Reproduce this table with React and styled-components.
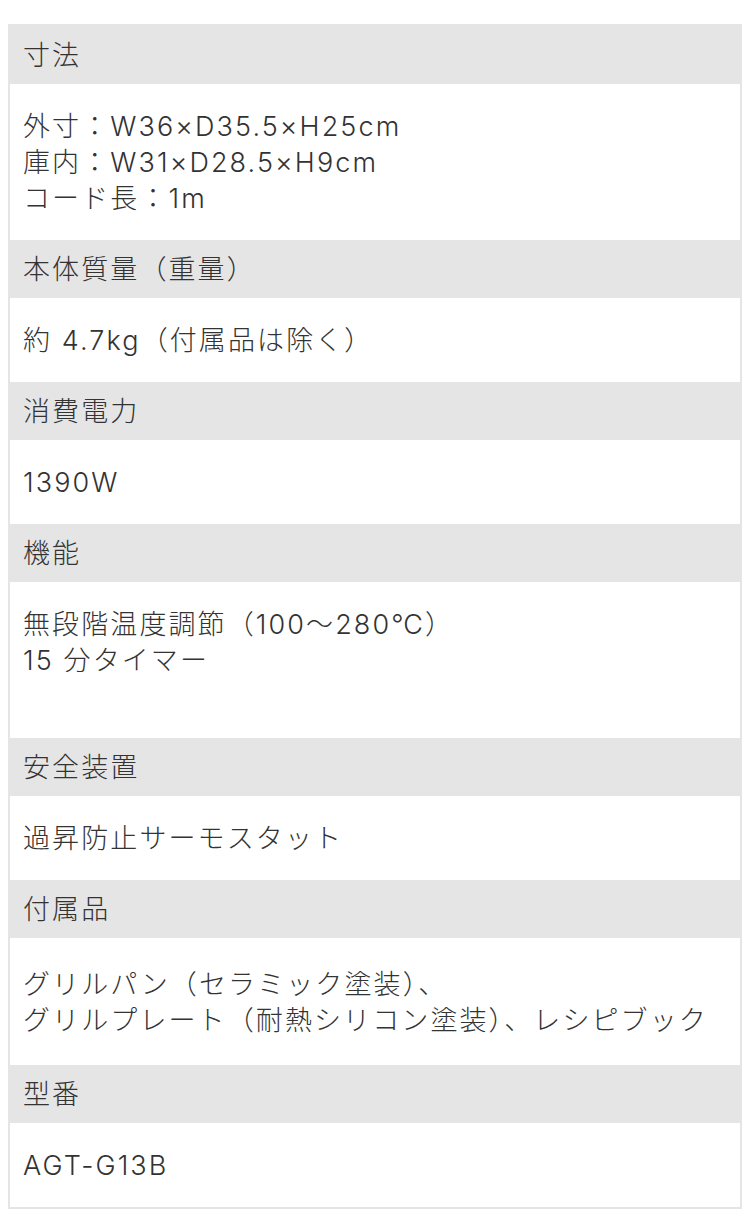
import React from "react";
import styled, { createGlobalStyle } from "styled-components";

const specs = [
  { label: "寸法", lines: ["外寸：W36×D35.5×H25cm", "庫内：W31×D28.5×H9cm", "コード長：1m"] },
  { label: "本体質量（重量）", lines: ["約 4.7kg（付属品は除く）"] },
  { label: "消費電力", lines: ["1390W"] },
  { label: "機能", lines: ["無段階温度調節（100〜280℃）", "15 分タイマー", ""] },
  { label: "安全装置", lines: ["過昇防止サーモスタット"] },
  {
    label: "付属品",
    lines: ["グリルパン（セラミック塗装）、", "グリルプレート（耐熱シリコン塗装）、レシピブック"],
    tall: true,
  },
  { label: "型番", lines: ["AGT-G13B"] },
];

const App = () => {
  return (
    <Page>
      <GlobalStyle />
      <SpecTable>
        {specs.map((s) => (
          <React.Fragment key={s.label}>
            <Head>{s.label}</Head>
            <Cell $tall={s.tall}>
              {s.lines.map((l, i) => (
                <Line key={i}>{l || "\u00a0"}</Line>
              ))}
            </Cell>
          </React.Fragment>
        ))}
      </SpecTable>
    </Page>
  );
};

export default App;

const GlobalStyle = createGlobalStyle`
  body {
    margin: 0;
    background: #ffffff;
  }
`;

const Page = styled.div`
  padding: 24px 8px 24px 8px;
  font-family: Inter, "Noto Sans CJK JP", sans-serif;
  font-size: 27px;
  font-weight: 300;
  letter-spacing: 2.1px;
  color: #333333;
`;

const SpecTable = styled.div`
  width: 734px;
  box-sizing: border-box;
  border: 2px solid #e5e5e5;
  display: flex;
  flex-direction: column;
`;

const Head = styled.div`
  background: #e5e5e5;
  padding: 12px 13px 10px;
  line-height: 36px;
`;

const Cell = styled.div`
  background: #ffffff;
  padding: 25px 13px 23px;
  line-height: 36px;
  min-height: ${(p) => (p.$tall ? "79px" : "0")};
  display: flex;
  flex-direction: column;
  justify-content: center;
`;

const Line = styled.div`
  white-space: nowrap;
`;
